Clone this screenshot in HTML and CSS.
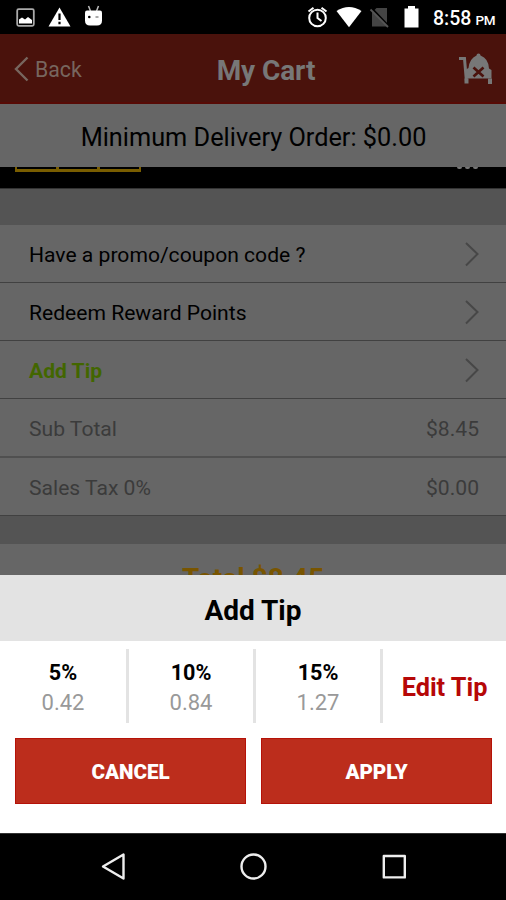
FILE: index.html
```html
<!DOCTYPE html>
<html lang="en">
<head>
<meta charset="utf-8">
<title>My Cart</title>
<link rel="stylesheet" href="styles.css">
</head>
<body>
<div class="phone">
  <div class="status">
    <svg class="status-left" width="110" height="34" viewBox="0 0 110 34">
      <rect x="17.2" y="9.2" width="16.6" height="16.6" rx="1.5" fill="none" stroke="#aaa" stroke-width="1.8"/>
      <path d="M19 23.5v-4l3-2 3 2 3-2.500 4 3v3.500z" fill="#fff"/>
      <path d="M59.500 7.500L70.500 26.500H48.500z" fill="#fff"/>
      <path d="M59.500 13.500v6.500M59.500 21.800v2.400" stroke="#000" stroke-width="2.200"/>
      <path d="M88.500 6l2 5M98.500 6l-2 5" stroke="#bbb" stroke-width="1.500"/>
      <path d="M87 10.500h13q2 0 2 2v8q0 5-5 5h-7q-5 0-5-5v-8q0-2 2-2z" fill="#fff"/>
      <circle cx="89.300" cy="17" r="1.300"/><path d="M95.500 17h3" stroke="#555" stroke-width="1"/>
    </svg>
    <svg class="status-right" width="130" height="34" viewBox="0 0 130 34">
      <g fill="none" stroke="#fff" stroke-width="2"><circle cx="17.500" cy="18" r="8.300"/><path d="M17.500 12.500V18l4 3M8.500 11.500l5-3.800M26.500 11.500l-5-3.800"/></g>
      <path d="M36.500 11Q49 3 61.500 11L49 27.300z" fill="#fff"/>
      <path d="M76.500 8H87v18.500H72V12.500z" fill="#444"/><path d="M71.500 8l17 18" stroke="#000" stroke-width="2"/><path d="M70.500 9.500l17.500 17.500" stroke="#555" stroke-width="1.800"/>
      <path d="M104.500 8.500h3.500V6h7v2.500h3.500v19h-14z" fill="#fff"/>
    </svg>
    <div class="clock">8:58<span class="ampm">PM</span></div>
  </div>
  <header class="topbar">
    <div class="back">
      <svg width="16" height="26" viewBox="0 0 16 26"><path d="M13.500 1.500L2 13l11.500 11.500" fill="none" stroke="#77665f" stroke-width="2.400"/></svg>
      <span>Back</span>
    </div>
    <h1 class="title">My Cart</h1>
    <svg class="cart" width="36" height="34" viewBox="0 0 36 34">
      <path d="M1 6.500h5.500L8.500 30" fill="none" stroke="#777" stroke-width="3"/>
      <path d="M18.500 3.500a2 2 0 1 1 4 0q8 3 8.500 13l2.500 1.500v8.500H8V17.500l2.500-1.500q1-9.500 8-12.500z" fill="#777"/>
      <path d="M15.500 15.500l10 9M25.500 15.500l-10 9" stroke="#4a120c" stroke-width="2.700"/>
      <path d="M6.500 26.500h4v5h-4zM30 26.500h4v5.500h-4z" fill="#777"/>
    </svg>
  </header>
  <div class="banner"><span class="t-min">Minimum Delivery Order: $0.00</span></div>
  <div class="item">
    <div class="stepper"><i></i><i></i><i></i></div>
    <div class="dots"><i></i><i></i><i></i></div>
  </div>
  <div class="gap"></div>
  <div class="row"><span class="t-promo">Have a promo/coupon code ?</span><svg class="chev" width="16" height="26" viewBox="0 0 16 26"><path d="M2 2l11.500 11L2 24.500"/></svg></div>
  <div class="row"><span class="t-redeem">Redeem Reward Points</span><svg class="chev" width="16" height="26" viewBox="0 0 16 26"><path d="M2 2l11.500 11L2 24.500"/></svg></div>
  <div class="row tip"><span class="t-tip">Add Tip</span><svg class="chev" width="16" height="26" viewBox="0 0 16 26"><path d="M2 2l11.500 11L2 24.500"/></svg></div>
  <div class="row muted sub"><span class="t-sub">Sub Total</span><span class="amt">$8.45</span></div>
  <div class="row muted"><span class="t-tax">Sales Tax 0%</span><span class="amt">$0.00</span></div>
  <div class="gap small"></div>
  <div class="total"><span>Total $8.45</span></div>
  <section class="sheet">
    <h2 class="sheet-title">Add Tip</h2>
    <div class="options">
      <div class="option"><b>5%</b><span>0.42</span></div>
      <div class="option"><b>10%</b><span>0.84</span></div>
      <div class="option"><b>15%</b><span>1.27</span></div>
      <div class="edit">Edit Tip</div>
    </div>
    <div class="buttons">
      <button class="btn">CANCEL</button>
      <button class="btn">APPLY</button>
    </div>
  </section>
  <nav class="nav">
    <svg width="506" height="66" viewBox="0 0 506 66" fill="none" stroke="#eee" stroke-width="2.400" stroke-linejoin="round">
      <path d="M123.500 20.500v24L103 32.500z"/><circle cx="253.500" cy="32.500" r="12"/><rect x="383.800" y="22" width="21" height="21.400"/>
    </svg>
  </nav>
</div>
</body>
</html>
```
FILE: styles.css
```css
* { box-sizing: border-box; }
body { margin: 0; background: #000; font-family: Roboto, sans-serif; color: #000; }
.phone { width: 506px; height: 900px; overflow: hidden; display: flex; flex-direction: column; }
.phone > * { flex: none; }
svg { display: block; flex: none; }
span { white-space: nowrap; }

.status { height: 34px; background: #000; display: flex; align-items: center; }
.status-right { margin-left: 190px; }
.clock { color: #fff; font-size: 19.5px; font-weight: 500; margin-left: 3px; padding-top: 3px; white-space: nowrap; }
.ampm { font-size: 13.5px; margin-left: 4px; letter-spacing: -0.3px; }

.topbar { height: 70px; background: #4a120c; border-bottom: 2px solid #570b06; color: #777; display: grid; grid-template-columns: 1fr auto 1fr; align-items: center; padding: 2px 12px 0 14px; }
.back { display: flex; align-items: center; gap: 5px; font-size: 21.3px; color: #77665f; }
.title { margin: 0 -12px 0 12px; font-size: 28px; font-weight: 700; letter-spacing: -0.1px; line-height: 32px; padding-top: 4px; }
.cart { justify-self: end; }

.banner { height: 63px; background: #666; display: flex; align-items: center; justify-content: center; font-size: 25.3px; padding: 3px 0 0 1px; }
.item { height: 21px; background: #000; display: flex; justify-content: space-between; align-items: flex-start; padding: 0 28px 0 15px; }
.stepper { display: flex; width: 126px; height: 5px; border: solid #795d00; border-width: 0 2px 3px; }
.stepper i { flex: 1; }
.stepper i + i { border-left: 3px solid #795d00; }
.dots { display: flex; gap: 3px; }
.dots i { width: 5px; height: 2px; background: #777; border-radius: 0 0 2px 2px; }
.gap { height: 37px; background: #545454; border-top: 1px solid #333; }
.gap.small { height: 28px; border: 0; }

.row { height: 58px; background: #666; border-bottom: 1px solid #414141; display: flex; justify-content: space-between; align-items: center; padding: 1px 27px 0 29px; font-size: 21.1px; }
.sub { height: 59px; border-bottom: 2px solid #505050; }
.chev { fill: none; stroke: #474747; stroke-width: 2; margin-right: -1px; }
.muted { color: #3b3b3b; }
.tip { color: #426600; }
.t-tip { font-weight: 700; }
.total { height: 31px; background: #666; overflow: hidden; text-align: center; font-size: 28px; font-weight: 700; line-height: 32px; color: #795500; padding-top: 19px; }

.sheet { height: 258px; background: #fff; }
.sheet-title { margin: 0; height: 66px; background: #e3e3e3; font-size: 28px; font-weight: 700; line-height: 71px; text-align: center; }
.options { height: 74px; margin-top: 8px; display: grid; grid-template-columns: 129px 127px 127px 1fr; }
.option { border-right: 3px solid #e3e3e3; display: flex; flex-direction: column; align-items: center; line-height: 30px; padding-top: 9px; }
.option b { font-size: 21.6px; font-weight: 700; }
.option span { font-size: 22px; color: #999; font-weight: 400; }
.edit { color: #b60707; font-size: 25.3px; font-weight: 700; display: flex; align-items: center; justify-content: center; padding-top: 2px; white-space: nowrap; }
.buttons { display: flex; gap: 15px; padding: 15px 14px 0 15px; }
.btn { flex: 1; height: 66px; border: 1px solid #b51208; background: #bc2d1c; color: #fff; font: 900 20.6px Roboto, sans-serif; padding: 2px 0 0; }
.nav { height: 67px; background: #000; border-top: 1px solid #333; }
```
